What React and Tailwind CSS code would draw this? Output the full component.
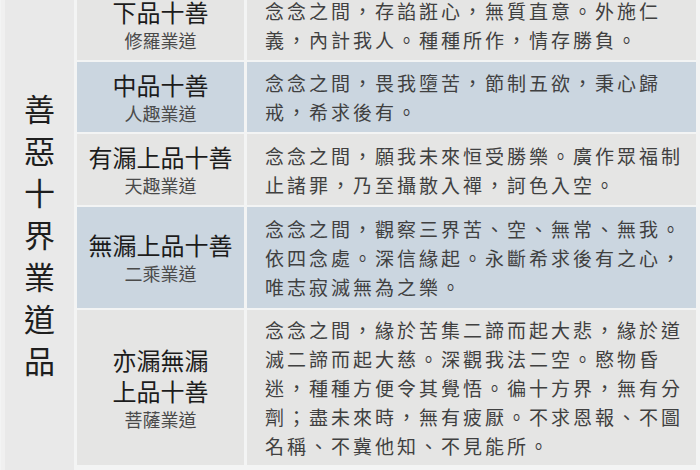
import React from "react";

const rows = [
  {
    h: "h-[71px]",
    bg: "bg-[#e5e5e4]",
    title: ["下品十善"],
    sub: "修羅業道",
    lines: ["念念之間，存諂誑心，無質直意。外施仁", "義，內計我人。種種所作，情存勝負。"],
  },
  {
    h: "h-[70px]",
    bg: "bg-[#cbd6e0]",
    title: ["中品十善"],
    sub: "人趣業道",
    lines: ["念念之間，畏我墮苦，節制五欲，秉心歸", "戒，希求後有。"],
  },
  {
    h: "h-[71px]",
    bg: "bg-[#e5e5e4]",
    title: ["有漏上品十善"],
    sub: "天趣業道",
    lines: ["念念之間，願我未來恒受勝樂。廣作眾福制", "止諸罪，乃至攝散入禪，訶色入空。"],
  },
  {
    h: "h-[101px]",
    bg: "bg-[#cbd6e0]",
    title: ["無漏上品十善"],
    sub: "二乘業道",
    lines: [
      "念念之間，觀察三界苦、空、無常、無我。",
      "依四念處。深信緣起。永斷希求後有之心，",
      "唯志寂滅無為之樂。",
    ],
  },
  {
    h: "h-[155px]",
    bg: "bg-[#e5e5e4]",
    title: ["亦漏無漏", "上品十善"],
    sub: "菩薩業道",
    lines: [
      "念念之間，緣於苦集二諦而起大悲，緣於道",
      "滅二諦而起大慈。深觀我法二空。愍物昏",
      "迷，種種方便令其覺悟。徧十方界，無有分",
      "劑；盡未來時，無有疲厭。不求恩報、不圖",
      "名稱、不冀他知、不見能所。",
    ],
  },
];

export default function App() {
  return (
    <div
      className="w-[700px] h-[470px] overflow-hidden bg-[#f3f4f4]"
      style={{ fontFamily: '"Noto Sans CJK TC", "Noto Sans CJK SC", sans-serif' }}
    >
      <div className="flex mt-[-11px] gap-[3px] pl-[1px]">
        <div className="w-[73px] h-[482px] bg-[#e9e9e9] border-l-[4px] border-[#f0f0f0] flex flex-col items-center justify-center pt-[8px]">
          {"善惡十界業道品".split("").map((c) => (
            <div key={c} className="text-[31px] leading-[42px] text-[#1e1e1e]">
              {c}
            </div>
          ))}
        </div>
        <div className="flex flex-col gap-[2px]">
          {rows.map((r, i) => (
            <div key={i} className={`flex gap-[3px] ${r.h}`}>
              <div className={`w-[167px] ${r.bg} flex flex-col items-center justify-center gap-[3px]`}>
                {r.title.map((t) => (
                  <div key={t} className="text-[24px] leading-[28px] text-[#1c1c1c]">
                    {t}
                  </div>
                ))}
                <div className="text-[18px] leading-[22px] text-[#4a4a4a]">{r.sub}</div>
              </div>
              <div className={`w-[449px] ${r.bg} flex flex-col justify-center pl-[18px]`}>
                {r.lines.map((l, j) => (
                  <div
                    key={j}
                    className="text-[19px] leading-[29px] tracking-[3px] text-[#404040] whitespace-nowrap"
                  >
                    {l}
                  </div>
                ))}
              </div>
            </div>
          ))}
        </div>
      </div>
    </div>
  );
}
